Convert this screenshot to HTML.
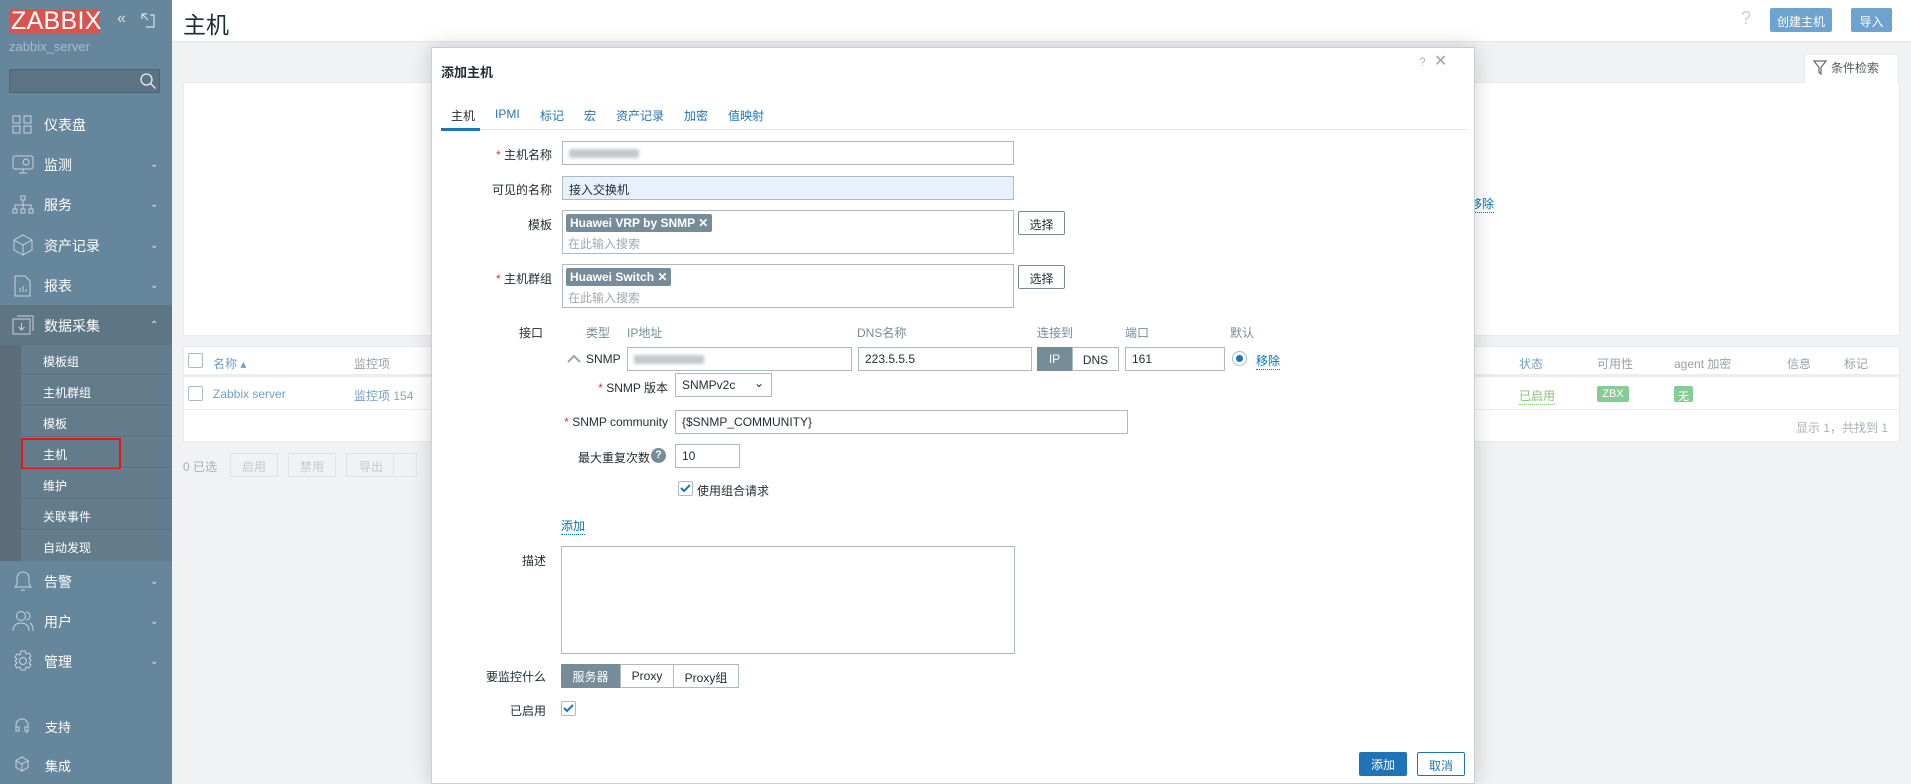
<!DOCTYPE html>
<html><head><meta charset="utf-8">
<style>
*{box-sizing:border-box;margin:0;padding:0}
body{width:1911px;height:784px;overflow:hidden;position:relative;background:#f1f2f4;font-family:"Liberation Sans","Noto Sans CJK SC",sans-serif;font-size:12px;color:#1f2c33}
.a{position:absolute;white-space:nowrap}
#side{left:0;top:0;width:172px;height:784px;background:#66869c}
.mi{position:absolute;left:44px;color:#fff;font-size:14px}
.ic{position:absolute;left:12px}
.car{position:absolute;left:150px;color:#dde5ea;font-size:10px}
.sub{position:absolute;left:21px;width:151px;height:30px;background:#637c8c;border-bottom:1px solid #586e7c;color:#fff;font-size:12px;padding:8px 0 0 22px}
.inp{position:absolute;border:1px solid #acbbc2;background:#fff;height:24px;padding:4px 6px;font-size:12px}
.lbl{position:absolute;text-align:right;font-size:12px;color:#1f2c33;white-space:nowrap}
.star{color:#e33734}
.tag{display:inline-block;background:#768d99;color:#fff;font-weight:bold;padding:2px 4px;border-radius:2px;font-size:12px}
.btnw{position:absolute;border:1px solid #768d99;background:#fff;height:24px;font-size:12px;text-align:center;padding-top:4px;border-radius:2px}
.lnk{color:#0275b8;border-bottom:1px dotted #0275b8}
.ph{color:#a0a9ae}
.gh{color:#768d99}
</style></head><body>

<!-- sidebar -->
<div id="side" class="a">
 <div class="a" style="left:9px;top:9px;width:91px;height:24px;background:#d9534f;color:#fff;font-size:25px;line-height:24px;padding-left:2px;letter-spacing:0.3px">ZABBIX</div>
 <div class="a" style="left:117px;top:10px;color:#d8e1e7;font-size:16px">«</div>
 <svg class="a" style="left:141px;top:13px" width="14" height="15"><path d="M1 1h5M1 1v5M1 1l6 6M5 14h8V2H9" stroke="#d8e1e7" fill="none" stroke-width="1.2"/></svg>
 <div class="a" style="left:9px;top:39px;color:#a9bccb;font-size:13px">zabbix_server</div>
 <div class="a" style="left:9px;top:69px;width:151px;height:24px;background:#5b7384;border:1px solid #4f6473;border-radius:2px"></div>
 <svg class="a" style="left:139px;top:72px" width="18" height="18"><circle cx="7.5" cy="7.5" r="5.5" stroke="#e6edf2" fill="none" stroke-width="1.3"/><path d="M11.5 11.5l5 5" stroke="#e6edf2" stroke-width="1.3"/></svg>

 <svg class="ic" style="top:115px" width="20" height="19" fill="none" stroke="#c5d3dd"><rect x="1" y="1" width="7" height="7"/><rect x="12" y="1" width="7" height="7"/><rect x="1" y="11" width="7" height="7"/><rect x="12" y="11" width="7" height="7"/></svg>
 <div class="mi" style="top:115px">仪表盘</div>
 <svg class="ic" style="top:155px" width="22" height="20" fill="none" stroke="#c5d3dd"><rect x="1" y="1" width="20" height="13" rx="2"/><path d="M7 18h8M11 14v4"/><circle cx="14" cy="7" r="3"/></svg>
 <div class="mi" style="top:155px">监测</div><div class="car" style="top:159px">⌄</div>
 <svg class="ic" style="top:195px" width="22" height="20" fill="none" stroke="#c5d3dd"><rect x="9" y="1" width="4" height="4"/><rect x="1" y="14" width="4" height="4"/><rect x="9" y="14" width="4" height="4"/><rect x="17" y="14" width="4" height="4"/><path d="M11 5v9M3 14v-4h16v4"/></svg>
 <div class="mi" style="top:195px">服务</div><div class="car" style="top:199px">⌄</div>
 <svg class="ic" style="top:234px" width="22" height="22" fill="none" stroke="#c5d3dd"><path d="M11 1l9 5v10l-9 5-9-5V6zM2 6l9 5 9-5M11 11v10"/></svg>
 <div class="mi" style="top:236px">资产记录</div><div class="car" style="top:240px">⌄</div>
 <svg class="ic" style="top:275px" width="20" height="22" fill="none" stroke="#c5d3dd"><path d="M3 1h10l5 5v15H3zM8 17v-4M11 17v-6M14 17v-3"/></svg>
 <div class="mi" style="top:276px">报表</div><div class="car" style="top:280px">⌄</div>
 <div class="a" style="left:0;top:305px;width:172px;height:40px;background:#5e7583"></div>
 <svg class="ic" style="top:315px" width="22" height="20" fill="none" stroke="#c5d3dd"><rect x="1" y="4" width="17" height="15"/><path d="M5 1h16v15M9.5 8v7M6.5 12l3 3 3-3"/></svg>
 <div class="mi" style="top:316px">数据采集</div><div class="car" style="top:320px">⌃</div>
 <div class="a" style="left:0;top:345px;width:21px;height:216px;background:#5b6d78"></div>
 <div class="sub" style="top:345px">模板组</div>
 <div class="sub" style="top:376px">主机群组</div>
 <div class="sub" style="top:407px">模板</div>
 <div class="sub" style="top:438px;border-left:2px solid #b7c6d0;padding-left:20px">主机</div>
 <div class="a" style="left:21px;top:438px;width:100px;height:32px;border:2px solid #e8131b"></div>
 <div class="sub" style="top:469px">维护</div>
 <div class="sub" style="top:500px">关联事件</div>
 <div class="sub" style="top:531px;height:30px;border:0">自动发现</div>
 <svg class="ic" style="top:570px" width="22" height="22" fill="none" stroke="#c5d3dd"><path d="M3 17h16l-2-3V8a6 6 0 0 0-12 0v6zM9 20h4"/></svg>
 <div class="mi" style="top:572px">告警</div><div class="car" style="top:576px">⌄</div>
 <svg class="ic" style="top:610px" width="22" height="22" fill="none" stroke="#c5d3dd"><circle cx="9" cy="6" r="4.5"/><path d="M1 21c0-5 3-8 8-8s8 3 8 8M14 2a4 4 0 0 1 0 8M18 13c2 1 3 4 3 8"/></svg>
 <div class="mi" style="top:612px">用户</div><div class="car" style="top:616px">⌄</div>
 <svg class="ic" style="top:650px" width="22" height="22" fill="none" stroke="#c5d3dd"><circle cx="11" cy="11" r="3.5"/><path d="M9 1h4l1 3 3-1 2 3-2 2 2 2v0l-2 3 2 2-2 3-3-1-1 3H9l-1-3-3 1-2-3 2-2-2-2 2-2-2-2 2-3 3 1z"/></svg>
 <div class="mi" style="top:652px">管理</div><div class="car" style="top:656px">⌄</div>
 <svg class="ic" style="left:14px;top:717px" width="16" height="16" fill="none" stroke="#c5d3dd"><path d="M2 10V8a6 6 0 0 1 12 0v2M2 10h3v4H2zM11 10h3v4h-3zM14 14l-2 2"/></svg>
 <div class="mi" style="left:45px;top:717px;font-size:13px">支持</div>
 <svg class="ic" style="left:14px;top:756px" width="16" height="16" fill="none" stroke="#c5d3dd"><path d="M8 1l6 3.5v7L8 15l-6-3.5v-7zM2 4.5L8 8l6-3.5M8 8v7"/></svg>
 <div class="mi" style="left:45px;top:756px;font-size:13px">集成</div>
</div>

<!-- header -->
<div class="a" style="left:172px;top:0;width:1739px;height:42px;background:#fff;border-bottom:1px solid #e3e6e8"></div>
<div class="a" style="left:183px;top:6px;font-size:23px;color:#1f2c33">主机</div>
<div class="a" style="left:1741px;top:8px;font-size:18px;color:#c8ced2">?</div>
<div class="a" style="left:1770px;top:8px;width:62px;height:24px;background:#6ea3cf;color:#fff;border-radius:2px;text-align:center;padding-top:5px">创建主机</div>
<div class="a" style="left:1851px;top:8px;width:41px;height:24px;background:#6ea3cf;color:#fff;border-radius:2px;text-align:center;padding-top:5px">导入</div>

<!-- filter -->
<div class="a" style="left:183px;top:82px;width:1717px;height:254px;background:#fff;border:1px solid #e8ebed"></div>
<div class="a" style="left:1804px;top:54px;width:95px;height:30px;background:#fff;border:1px solid #e8ebed;border-bottom:0"></div>
<svg class="a" style="left:1813px;top:60px" width="14" height="15"><path d="M1 1h12L8 7.5V14L6 12.5V7.5z" fill="none" stroke="#5d6b73" stroke-width="1.2"/></svg>
<div class="a" style="left:1831px;top:59px;color:#4f5a60">条件检索</div>
<div class="a lnk" style="left:1470px;top:195px">移除</div>

<!-- table -->
<div class="a" style="left:183px;top:346px;width:1717px;height:96px;background:#fff;border:1px solid #e8ebed"></div>
<div class="a" style="left:184px;top:374px;width:1715px;height:3px;background:#ebeef0"></div>
<div class="a" style="left:184px;top:409px;width:1715px;height:1px;background:#ebeef0"></div>
<div class="a" style="left:188px;top:353px;width:15px;height:15px;border:1px solid #acbbc2;border-radius:2px"></div>
<div class="a gh" style="left:213px;top:355px;color:#6f9fc5">名称 ▴</div>
<div class="a" style="left:354px;top:355px;color:#96a2a8">监控项</div>
<div class="a" style="left:1519px;top:355px;color:#6f9fc5">状态</div>
<div class="a" style="left:1597px;top:355px;color:#96a2a8">可用性</div>
<div class="a" style="left:1674px;top:355px;color:#96a2a8">agent 加密</div>
<div class="a" style="left:1787px;top:355px;color:#96a2a8">信息</div>
<div class="a" style="left:1844px;top:355px;color:#96a2a8">标记</div>
<div class="a" style="left:188px;top:386px;width:15px;height:15px;border:1px solid #acbbc2;border-radius:2px"></div>
<div class="a" style="left:213px;top:387px;color:#6f9fc5">Zabbix server</div>
<div class="a" style="left:354px;top:387px;color:#6f9fc5">监控项 <span style="color:#96a2a8">154</span></div>
<div class="a" style="left:1519px;top:387px;color:#86c275;border-bottom:1px dotted #86c275">已启用</div>
<div class="a" style="left:1597px;top:386px;width:32px;height:16px;background:#86cc95;color:#fff;font-size:11px;text-align:center;padding-top:2px;border-radius:2px">ZBX</div>
<div class="a" style="left:1674px;top:386px;width:19px;height:16px;background:#86cc95;color:#fff;font-size:11px;text-align:center;padding-top:2px;border-radius:2px">无</div>
<div class="a" style="left:1796px;top:419px;color:#a7b0b5">显示 1，共找到 1</div>
<div class="a" style="left:183px;top:458px;color:#a7b0b5">0 已选</div>
<div class="a" style="left:230px;top:453px;width:48px;height:24px;border:1px solid #dfe3e5;color:#c3c9cc;text-align:center;padding-top:4px">启用</div>
<div class="a" style="left:288px;top:453px;width:48px;height:24px;border:1px solid #dfe3e5;color:#c3c9cc;text-align:center;padding-top:4px">禁用</div>
<div class="a" style="left:346px;top:453px;width:71px;height:24px;border:1px solid #dfe3e5;color:#c3c9cc;padding:4px 0 0 12px">导出</div>
<div class="a" style="left:393px;top:453px;width:1px;height:24px;background:#dfe3e5"></div>

<!-- modal -->
<div class="a" style="left:431px;top:47px;width:1044px;height:737px;background:#fff;border:1px solid #c6cfd4;box-shadow:0 0 20px rgba(0,0,0,0.18)"></div>
<div class="a" style="left:441px;top:62px;font-size:13px;font-weight:bold">添加主机</div>
<div class="a" style="left:1419px;top:55px;color:#b0b8bd;font-size:12px">?</div>
<div class="a" style="left:1434px;top:51px;color:#9ca6ab;font-size:16px">✕</div>
<div class="a" style="left:441px;top:129px;width:1026px;height:1px;background:#e3e6e8"></div>
<div class="a" style="left:441px;top:128px;width:39px;height:3px;background:#1f74b8"></div>
<div class="a" style="left:451px;top:107px">主机</div>
<div class="a" style="left:495px;top:107px;color:#1f74b8">IPMI</div>
<div class="a" style="left:540px;top:107px;color:#1f74b8">标记</div>
<div class="a" style="left:584px;top:107px;color:#1f74b8">宏</div>
<div class="a" style="left:616px;top:107px;color:#1f74b8">资产记录</div>
<div class="a" style="left:684px;top:107px;color:#1f74b8">加密</div>
<div class="a" style="left:728px;top:107px;color:#1f74b8">值映射</div>

<div class="lbl" style="right:1359px;top:146px"><span class="star">*</span> 主机名称</div>
<div class="inp" style="left:562px;top:141px;width:452px"><span style="display:inline-block;width:70px;height:9px;background:#c4c8cc;filter:blur(1.5px);margin-top:3px"></span></div>
<div class="lbl" style="right:1359px;top:181px">可见的名称</div>
<div class="inp" style="left:562px;top:176px;width:452px;background:#e8f0fe">接入交换机</div>
<div class="lbl" style="right:1359px;top:216px">模板</div>
<div class="inp" style="left:562px;top:210px;width:452px;height:44px;padding:3px 3px"><span class="tag">Huawei VRP by SNMP ✕</span><div class="ph" style="margin:3px 0 0 2px">在此输入搜索</div></div>
<div class="btnw" style="left:1018px;top:211px;width:47px">选择</div>
<div class="lbl" style="right:1359px;top:270px"><span class="star">*</span> 主机群组</div>
<div class="inp" style="left:562px;top:264px;width:452px;height:44px;padding:3px 3px"><span class="tag">Huawei Switch ✕</span><div class="ph" style="margin:3px 0 0 2px">在此输入搜索</div></div>
<div class="btnw" style="left:1018px;top:265px;width:47px">选择</div>

<div class="lbl" style="left:519px;top:324px">接口</div>
<div class="a gh" style="left:586px;top:324px">类型</div>
<div class="a gh" style="left:627px;top:324px">IP地址</div>
<div class="a gh" style="left:857px;top:324px">DNS名称</div>
<div class="a gh" style="left:1037px;top:324px">连接到</div>
<div class="a gh" style="left:1125px;top:324px">端口</div>
<div class="a gh" style="left:1230px;top:324px">默认</div>
<svg class="a" style="left:567px;top:354px" width="14" height="9"><path d="M1 8l6-6 6 6" stroke="#9aa7ae" stroke-width="2" fill="none"/></svg>
<div class="a" style="left:586px;top:352px">SNMP</div>
<div class="inp" style="left:627px;top:347px;width:225px"><span style="display:inline-block;width:70px;height:9px;background:#c4c8cc;filter:blur(1.5px);margin-top:3px"></span></div>
<div class="inp" style="left:858px;top:347px;width:174px">223.5.5.5</div>
<div class="a" style="left:1037px;top:347px;width:35px;height:24px;background:#768d99;color:#fff;text-align:center;padding-top:5px">IP</div>
<div class="a" style="left:1072px;top:347px;width:47px;height:24px;border:1px solid #acbbc2;text-align:center;padding-top:5px">DNS</div>
<div class="inp" style="left:1125px;top:347px;width:100px">161</div>
<div class="a" style="left:1232px;top:351px;width:15px;height:15px;border-radius:50%;border:1px solid #acbbc2;background:#fff"><div style="margin:3px;width:7px;height:7px;border-radius:50%;background:#1f74b8"></div></div>
<div class="a lnk" style="left:1256px;top:352px">移除</div>

<div class="lbl" style="right:1243px;top:379px"><span class="star">*</span> SNMP 版本</div>
<div class="inp" style="left:675px;top:373px;width:97px">SNMPv2c<span style="position:absolute;right:7px;top:2px;font-size:12px">⌄</span></div>
<div class="lbl" style="right:1243px;top:415px"><span class="star">*</span> SNMP community</div>
<div class="inp" style="left:675px;top:410px;width:453px">{$SNMP_COMMUNITY}</div>
<div class="lbl" style="right:1261px;top:449px">最大重复次数</div>
<div class="a" style="left:651px;top:448px;width:15px;height:15px;border-radius:50%;background:#768d99;color:#fff;font-size:11px;font-weight:bold;text-align:center;line-height:15px">?</div>
<div class="inp" style="left:675px;top:444px;width:65px">10</div>
<div class="a" style="left:678px;top:481px;width:15px;height:15px;border:1px solid #acbbc2;border-radius:2px"></div>
<svg class="a" style="left:680px;top:484px" width="11" height="9"><path d="M1 4l3 3 6-6" stroke="#1f74b8" stroke-width="2" fill="none"/></svg>
<div class="a" style="left:697px;top:482px">使用组合请求</div>
<div class="a lnk" style="left:561px;top:517px">添加</div>

<div class="lbl" style="right:1365px;top:552px">描述</div>
<div class="a" style="left:561px;top:546px;width:454px;height:108px;border:1px solid #acbbc2"></div>
<div class="lbl" style="right:1365px;top:668px">要监控什么</div>
<div class="a" style="left:561px;top:664px;width:59px;height:24px;background:#768d99;color:#fff;text-align:center;padding-top:4px">服务器</div>
<div class="a" style="left:620px;top:664px;width:54px;height:24px;border:1px solid #acbbc2;text-align:center;padding-top:4px">Proxy</div>
<div class="a" style="left:673px;top:664px;width:66px;height:24px;border:1px solid #acbbc2;text-align:center;padding-top:4px">Proxy组</div>
<div class="lbl" style="right:1365px;top:702px">已启用</div>
<div class="a" style="left:561px;top:701px;width:15px;height:15px;border:1px solid #acbbc2;border-radius:2px"></div>
<svg class="a" style="left:563px;top:704px" width="11" height="9"><path d="M1 4l3 3 6-6" stroke="#1f74b8" stroke-width="2" fill="none"/></svg>

<div class="a" style="left:1359px;top:752px;width:48px;height:24px;background:#1f74b8;color:#fff;text-align:center;padding-top:4px;border-radius:2px">添加</div>
<div class="a" style="left:1417px;top:752px;width:48px;height:24px;border:1px solid #1f74b8;color:#1f74b8;text-align:center;padding-top:4px;border-radius:2px">取消</div>
</body></html>
